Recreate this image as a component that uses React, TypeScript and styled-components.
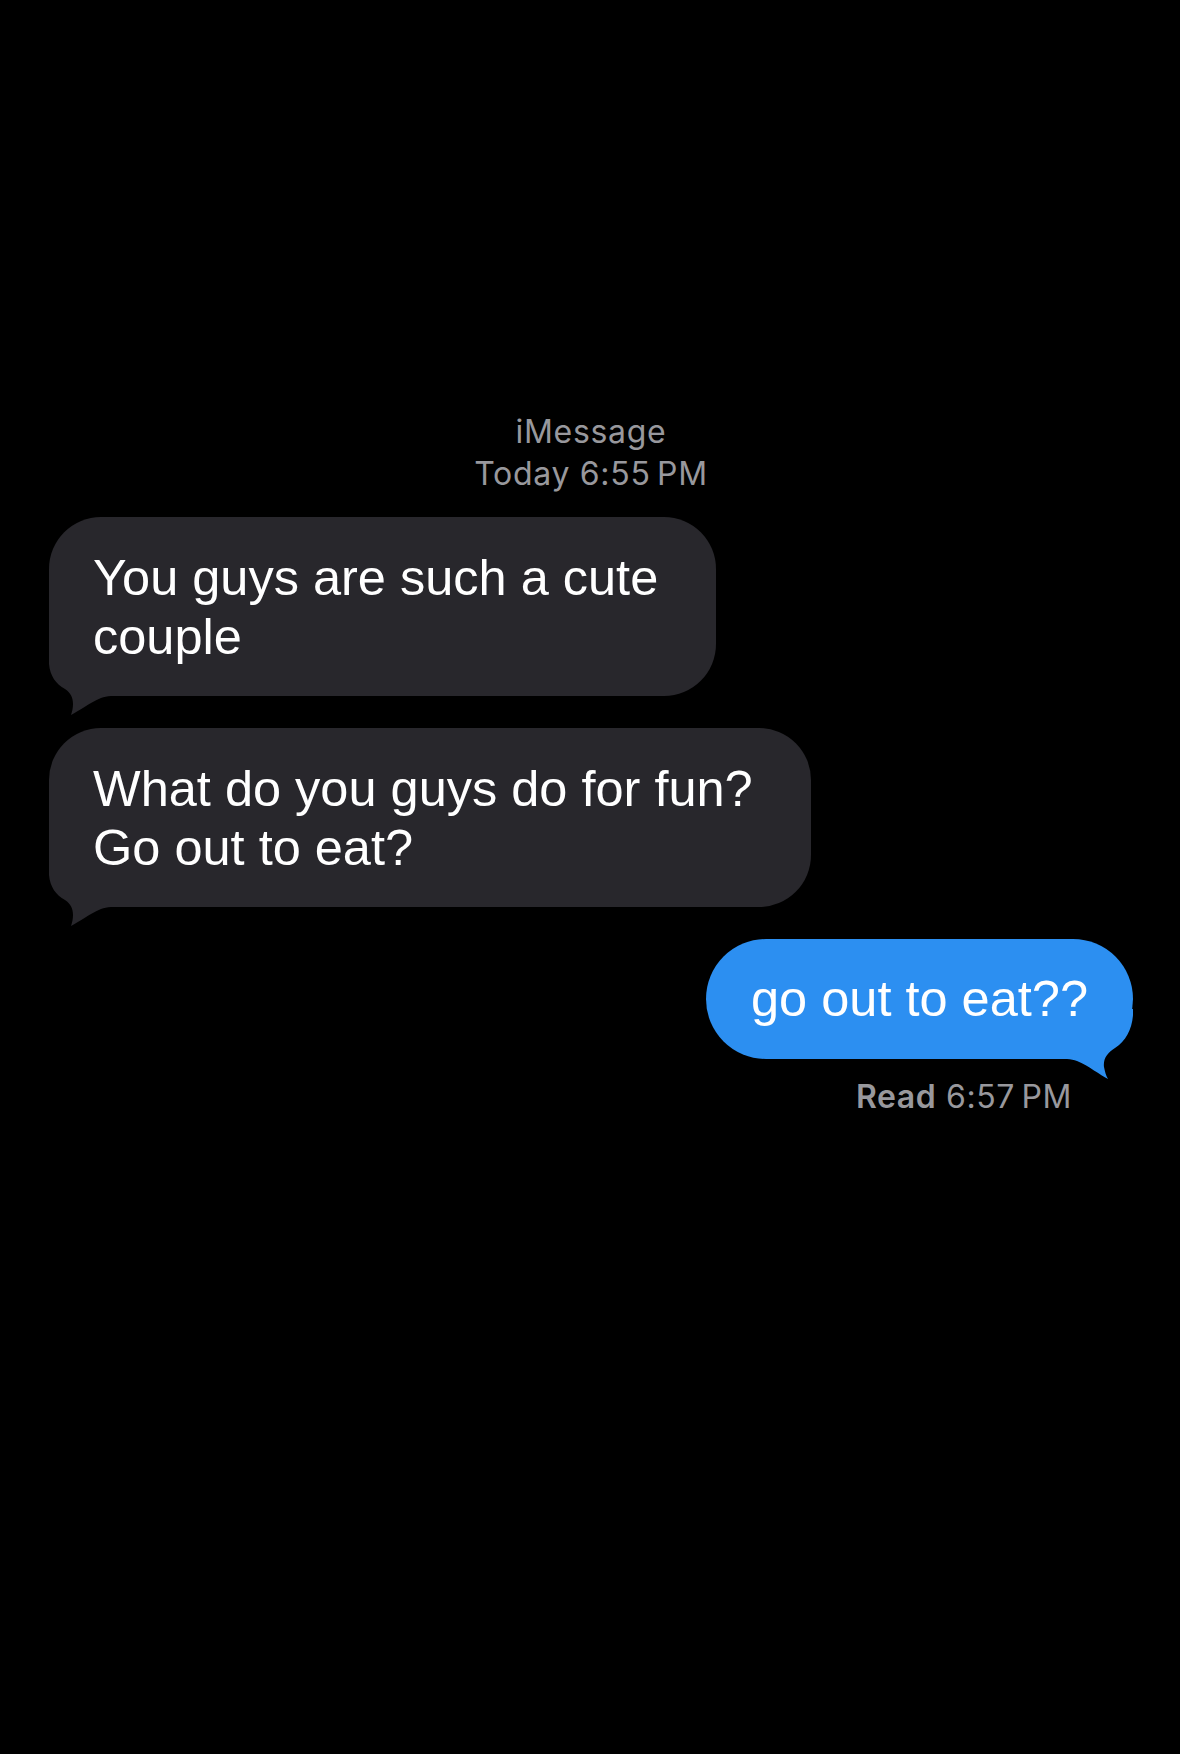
import React from "react";
import styled, { createGlobalStyle, css } from "styled-components";

const GlobalStyle = createGlobalStyle`
  html, body {
    margin: 0;
    padding: 0;
    background: #000;
  }
  body {
    font-family: Inter, "Liberation Sans", Arial, sans-serif;
    -webkit-font-smoothing: antialiased;
  }
`;

const GRAY = "#28272c";
const BLUE = "#2c8ff1";

// tail outlines, drawn from the bubble's bottom corner (viewBox 70x70, bubble bottom at y=50)
const TAIL_IN =
  "M0 0 L0 18 C1 30 7 38 16 43 C22 47 24 52 24 58 C24 62 23 66 22 69 C30 65 40 57 52 52 C55 51 58 50 62 50 L62 0 Z";
const TAIL_OUT =
  "M0 0 L0 6 C1 20 7 32 18 39 C26 44 30 50 29 58 C28 63 27 67 25 70 C33 66 44 57 56 52 C59 51 62 50 66 50 L66 0 Z";

const Screen = styled.div`
  min-height: 1754px;
  background: #000;
  display: flex;
  flex-direction: column;
  padding: 411px 47px 0 49px;
  box-sizing: border-box;
`;

const Header = styled.div`
  display: flex;
  flex-direction: column;
  align-items: center;
  color: #98989d;
  font-size: 32px;
  line-height: 42px;
  font-weight: 400;
  letter-spacing: 0.7px;
`;

const Thread = styled.div`
  display: flex;
  flex-direction: column;
  gap: 32px;
  margin-top: 22px;
`;

const Row = styled.div<{ $out?: boolean }>`
  display: flex;
  flex-direction: column;
  align-items: ${(p) => (p.$out ? "flex-end" : "flex-start")};
`;

const Bubble = styled.div<{ $out?: boolean }>`
  position: relative;
  z-index: 0;
  font-family: "Liberation Sans", Arial, sans-serif;
  font-size: 50.5px;
  line-height: 59px;
  font-weight: 400;
  color: #fff;
  white-space: nowrap;
  ${(p) =>
    p.$out
      ? css`
          background: ${BLUE};
          padding: 30px 45px 31px 45px;
          border-radius: 60px;
        `
      : css`
          background: ${GRAY};
          padding: 31px 58px 30px 44px;
          border-radius: 52px 52px 52px 40px;
        `}
`;

const Line = styled.span`
  display: block;
`;

const Tail = styled.svg<{ $out?: boolean }>`
  position: absolute;
  z-index: -1;
  bottom: -20px;
  width: 70px;
  height: 70px;
  ${(p) =>
    p.$out
      ? css`
          right: 0;
          transform: scaleX(-1);
        `
      : css`
          left: 0;
        `}
`;

const Status = styled.div`
  margin-top: 17px;
  margin-right: 61px;
  color: #98989d;
  font-size: 32px;
  line-height: 42px;
  letter-spacing: 0.6px;
  b {
    font-weight: 600;
  }
`;

type Message = { lines: string[]; out?: boolean };

const messages: Message[] = [
  { lines: ["You guys are such a cute", "couple"] },
  { lines: ["What do you guys do for fun?", "Go out to eat?"] },
  { lines: ["go out to eat??"], out: true },
];

export default function App() {
  return (
    <>
      <GlobalStyle />
      <Screen>
        <Header>
          <span>iMessage</span>
          <span>Today 6:55{"\u202F"}PM</span>
        </Header>
        <Thread>
          {messages.map((m, i) => (
            <Row key={i} $out={m.out}>
              <Bubble $out={m.out}>
                {m.lines.map((l) => (
                  <Line key={l}>{l}</Line>
                ))}
                <Tail $out={m.out} viewBox="0 0 70 70" aria-hidden>
                  <path d={m.out ? TAIL_OUT : TAIL_IN} fill={m.out ? BLUE : GRAY} />
                </Tail>
              </Bubble>
              {m.out && (
                <Status>
                  <b>Read</b> 6:57{"\u202F"}PM
                </Status>
              )}
            </Row>
          ))}
        </Thread>
      </Screen>
    </>
  );
}
